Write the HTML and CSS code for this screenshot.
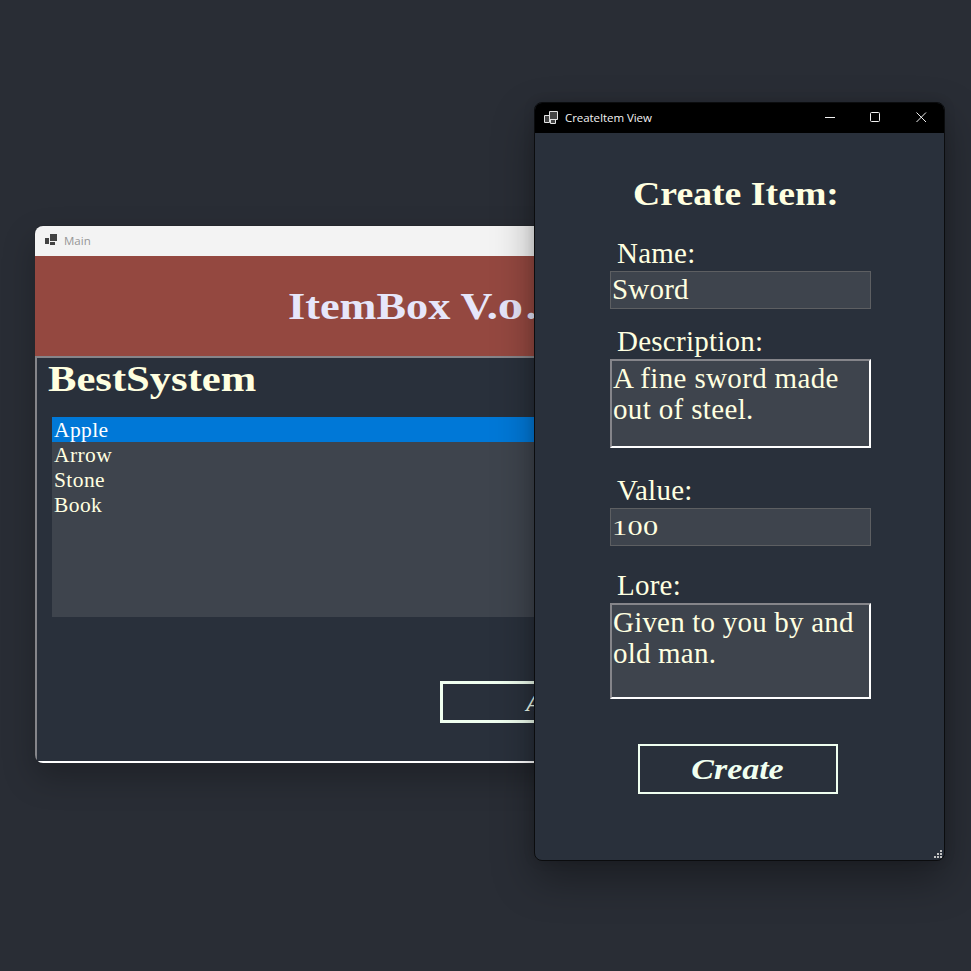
FILE: index.html
```html
<!DOCTYPE html>
<html lang="en">
<head>
<meta charset="utf-8">
<title>ItemBox</title>
<link rel="stylesheet" href="styles.css">
</head>
<body>
<main class="desktop">
  <section class="window main-window">
    <header class="titlebar light">
      <svg class="app-icon" width="14" height="13" viewBox="0 0 14 13"><path d="M1 4h4v6H1zM6 0h7v7H6zM6 8h5v3H6z" fill="#424242"/></svg>
      <span class="caption">Main</span>
    </header>
    <div class="banner"><h1 class="brand">ItemBox V.<span class="zero">0</span>.</h1></div>
    <div class="panel">
      <h2 class="system">BestSystem</h2>
      <ul class="items">
        <li class="selected">Apple</li>
        <li>Arrow</li>
        <li>Stone</li>
        <li>Book</li>
      </ul>
      <button class="add">Add</button>
    </div>
  </section>

  <section class="window dialog">
    <header class="titlebar dark">
      <svg class="app-icon" width="15" height="14" viewBox="0 0 15 14"><g fill="#444" stroke="#e4e4e4" stroke-width="1"><path d="M.5 4.5h5v7h-5z"/><path d="M6.500 8.500h5v4h-5z"/><path d="M5.500.5h8v8h-8z"/></g></svg>
      <span class="caption">CreateItem View</span>
      <svg class="controls" width="104" height="12" viewBox="0 0 104 12" fill="none" stroke="#f2f2f2"><path d="M0 5.500h10"/><rect x="45.500" y=".5" width="9" height="9" rx="1"/><path d="M91.500.5l9.500 9.500M101 .5l-9.500 9.500"/></svg>
    </header>
    <form class="form">
      <h2 class="form-title">Create Item:</h2>
      <div class="group name"><span class="label">Name:</span><div class="field single">Sword</div></div>
      <div class="group description"><span class="label">Description:</span><div class="field multi">A fine sword made<br>out of steel.</div></div>
      <div class="group value"><span class="label">Value:</span><div class="field single"><span class="digits">100</span></div></div>
      <div class="group lore"><span class="label">Lore:</span><div class="field multi">Given to you by and<br>old man.</div></div>
      <button type="button" class="create"><span class="create-text">Create</span></button>
    </form>
    <svg class="grip" width="9" height="9" viewBox="0 0 9 9" fill="#c4c4c4"><path d="M6 0h2v2H6zM3 3h2v2H3zM6 3h2v2H6zM0 6h2v2H0zM3 6h2v2H3zM6 6h2v2H6z"/></svg>
  </section>
</main>
</body>
</html>
```
FILE: styles.css
```css
* { box-sizing: border-box; }
body { margin: 0; }
h1, h2, ul { margin: 0; padding: 0; }

.desktop {
  position: relative;
  width: 971px;
  height: 971px;
  overflow: hidden;
  background: #292d35;
  font-family: Georgia, "Liberation Serif", serif;
  color: #ffffe0;
}

.window {
  position: absolute;
  display: flex;
  flex-direction: column;
  overflow: hidden;
  border-radius: 8px;
}
.main-window {
  left: 35px;
  top: 226px;
  width: 760px;
  height: 537px;
  background: #29303b;
  box-shadow: 0 0 0 1px #24272d, 0 14px 32px rgba(0, 0, 0, .26);
}
.dialog {
  left: 534px;
  top: 102px;
  width: 411px;
  height: 759px;
  background: #29303b;
  border: 1px solid #0b0c0e;
  box-shadow: 0 18px 40px rgba(0, 0, 0, .34), 0 0 12px rgba(0, 0, 0, .12);
}

.titlebar {
  display: flex;
  align-items: center;
  flex: none;
  height: 30px;
  font: 12px/16px "Open Sans", "Noto Sans", sans-serif;
}
.light { padding-left: 9px; background: #f3f3f3; color: #969696; }
.light .caption { margin-left: 6px; font-size: 11.5px; }
.light .app-icon { margin-bottom: 1px; }
.dark { padding-left: 9px; background: #000; color: #f2f2f2; }
.dark .caption { margin-left: 6px; font-size: 11.5px; letter-spacing: -.07px; }
.controls { margin-left: auto; margin-right: 15px; }

.banner {
  flex: none;
  height: 100px;
  padding: 28px 0 0 253px;
  background: #944840;
}
.brand {
  width: max-content;
  font-size: 38px;
  line-height: 44px;
  color: #e6e6fa;
  transform: scaleX(1.165);
  transform-origin: left;
  white-space: nowrap;
}
.zero {
  display: inline-block;
  width: 24px;
  font-size: 29px;
  line-height: 1;
  transform: scaleX(1.5);
  transform-origin: left;
}

.panel {
  flex: 1;
  border: solid;
  border-width: 2px;
  border-color: #85858a #fff #fff #85858a;
  padding: 0 15px;
}
.system {
  width: max-content;
  margin-left: -4px;
  height: 59px;
  font-size: 35.500px;
  line-height: 43px;
  transform: scaleX(1.2);
  transform-origin: left;
}
.items {
  height: 200px;
  list-style: none;
  background: #3e444d;
  font-size: 21.500px;
  line-height: 25px;
  letter-spacing: .4px;
}
.items li { height: 25px; padding: 1px 0 0 2px; }
.items .selected { background: #0078d7; color: #fff; }

.add, .create {
  display: block;
  padding: 0;
  background: none;
  border: solid #f0fff0;
  color: #f0fff0;
  font-family: inherit;
  font-weight: bold;
  font-style: italic;
}
.add {
  width: 220px;
  height: 42px;
  margin: 64px 0 0 388px;
  padding: 2px 0 0 83px;
  border-width: 3px;
  font-size: 24px;
  text-align: left;
}

.form {
  display: flex;
  flex-direction: column;
  padding-left: 75px;
}
.form-title {
  width: max-content;
  height: 64px;
  margin: 38px 0 0 23px;
  font-size: 33px;
  line-height: 46px;
  transform: scaleX(1.145);
  transform-origin: left;
}
.group { display: flex; flex-direction: column; width: 261px; }
.label {
  height: 36px;
  padding-left: 7px;
  font-size: 29px;
  line-height: 36px;
  letter-spacing: .25px;
}
.field {
  background: #3e444d;
  font-size: 29px;
  letter-spacing: .2px;
  white-space: nowrap;
}
.single { height: 38px; padding-left: 1px; border: 1px solid #5d5f62; line-height: 35px; }
.multi { padding-left: 1px; border: 2px solid; border-color: #85858a #fff #fff #85858a; line-height: 31px; }
.description { margin-top: 14px; }
.description .field { height: 89px; padding-top: 2px; letter-spacing: .35px; }
.value { margin-top: 24px; }
.lore { margin-top: 21px; }
.lore .field { height: 96px; padding-top: 2px; letter-spacing: .2px; }
.digits {
  display: inline-block;
  font-size: 22px;
  line-height: 1;
  transform: scaleX(1.38);
  transform-origin: left;
}
.value .single { line-height: 33px; }

.create {
  width: 200px;
  height: 50px;
  margin: 45px 0 0 28px;
  padding-right: 2px;
  border-width: 2px;
  font-size: 29px;
}
.create-text { display: inline-block; transform: scaleX(1.17); }
.grip { position: absolute; right: 1px; bottom: 1px; }
```
